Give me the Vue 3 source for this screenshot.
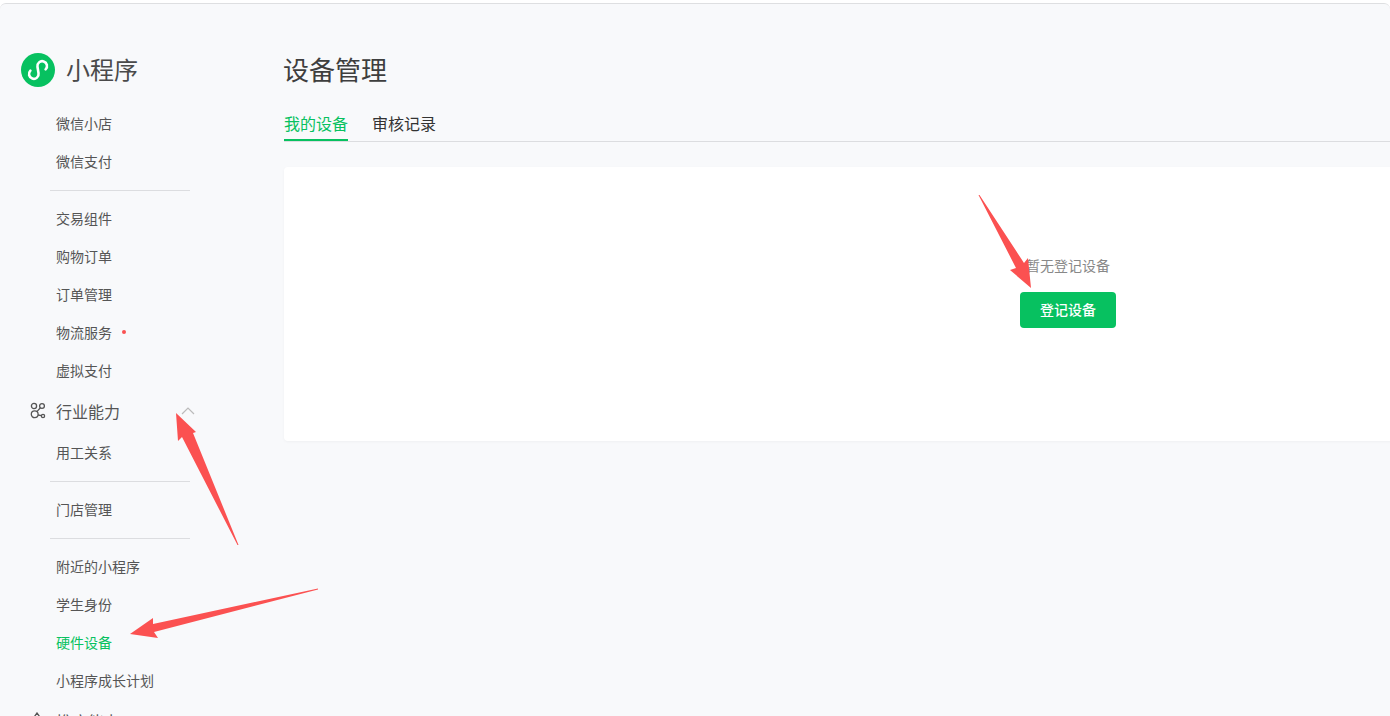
<template>
  <div class="page">
    <aside class="sidebar">
      <div class="brand">
        <svg class="logo" width="34" height="34" viewBox="0 0 34 34">
          <circle cx="17" cy="17" r="17" fill="#07c160" />
          <path d="M9.400 17.600A4.800 4.800 0 1 0 17.530 20.200L16.470 13.800A4.800 4.800 0 1 1 24.600 16.400" fill="none" stroke="#fff" stroke-width="2.600" stroke-linecap="round" />
        </svg>
        <span class="brand-name">小程序</span>
      </div>
      <template v-for="(item, i) in menu" :key="i">
        <div v-if="item.divider" class="divider"></div>
        <div v-else-if="item.group" class="group">
          <svg v-if="item.open" class="group-icon" width="18" height="18" viewBox="0 0 18 18" fill="none" stroke="#555" stroke-width="1.300">
            <circle cx="4" cy="4" r="2.600" />
            <circle cx="12" cy="4" r="2.400" />
            <circle cx="4.700" cy="12.300" r="3.400" />
            <circle cx="13" cy="14" r="1.600" />
            <path d="M10.400 5.800l-3.500 3.800M8 13l3.500.6" />
          </svg>
          <svg v-else class="group-icon" width="18" height="18" viewBox="0 0 18 18" fill="none" stroke="#555" stroke-width="1.300">
            <path d="M2 8l5-7 5 7" />
          </svg>
          <span>{{ item.label }}</span>
          <svg v-if="item.open" class="chevron" width="14" height="8" viewBox="0 0 14 8" fill="none" stroke="#bbb" stroke-width="1.200">
            <path d="M1 7l6-6 6 6" />
          </svg>
        </div>
        <div v-else class="item" :class="{ active: item.active }">
          {{ item.label }}<i v-if="item.dot" class="dot"></i>
        </div>
      </template>
    </aside>

    <main class="main">
      <h1 class="title">设备管理</h1>
      <div class="tabs">
        <div class="tab active">我的设备</div>
        <div class="tab">审核记录</div>
      </div>
      <section class="card">
        <p class="empty">暂无登记设备</p>
        <button class="btn">登记设备</button>
      </section>
    </main>

    <!-- 红色标注箭头 -->
    <svg class="marks" width="1390" height="716" viewBox="0 0 1390 716">
      <polygon v-for="(p, i) in arrows" :key="i" :points="p" fill="#fb5151" />
    </svg>
  </div>
</template>

<script setup>
const menu = [
  { label: '微信小店' },
  { label: '微信支付' },
  { divider: true },
  { label: '交易组件' },
  { label: '购物订单' },
  { label: '订单管理' },
  { label: '物流服务', dot: true },
  { label: '虚拟支付' },
  { label: '行业能力', group: true, open: true },
  { label: '用工关系' },
  { divider: true },
  { label: '门店管理' },
  { divider: true },
  { label: '附近的小程序' },
  { label: '学生身份' },
  { label: '硬件设备', active: true },
  { label: '小程序成长计划' },
  { label: '推广能力', group: true }
]

const arrows = [
  '238.500,545 237.500,545 182,437 178,441 176,413 196,432 193,433',
  '318,589.500 318,588.500 153,624 153,618 130,634 158,638 154,632',
  '979.500,195 978.500,195 1016,268 1010,270 1031,288 1028,258 1024,263'
]
</script>

<style scoped>
.page {
  position: relative;
  display: flex;
  width: 1390px;
  height: 713px;
  margin-top: 3px;
  overflow: hidden;
  background: #f8f9fb;
  border-top: 1px solid #dedfe1;
  border-radius: 6px 6px 0 0;
  box-sizing: border-box;
  font-family: "Noto Sans CJK SC", "Liberation Sans", sans-serif;
  color: #555;
}

.sidebar {
  flex: 0 0 284px;
  padding-top: 49px;
  box-sizing: border-box;
}

.brand {
  display: flex;
  align-items: center;
  gap: 11px;
  height: 34px;
  margin: 0 0 17px 21px;
}

.brand-name {
  position: relative;
  top: -2px;
  font-size: 24px;
  color: #4a4a4a;
}

.item {
  display: flex;
  align-items: center;
  height: 38px;
  padding-left: 56px;
  font-size: 14px;
  color: #555;
}

.item.active {
  color: #07c160;
}

.dot {
  width: 4px;
  height: 4px;
  margin-left: 10px;
  border-radius: 50%;
  background: #fa5151;
}

.divider {
  width: 140px;
  height: 1px;
  margin: 10px 0 8px 50px;
  background: #dcdde0;
}

.group {
  position: relative;
  display: flex;
  align-items: center;
  height: 44px;
  padding-left: 56px;
  font-size: 16px;
}

.group-icon {
  position: absolute;
  left: 30px;
  top: 13px;
}

.chevron {
  position: absolute;
  left: 181px;
  top: 18px;
}

.main {
  flex: 0 0 1568px;
  padding-top: 43px;
}

.title {
  margin: 0 0 0 -1px;
  font-size: 26px;
  font-weight: 400;
  line-height: 44px;
  color: #3e3e3e;
}

.tabs {
  display: flex;
  gap: 24px;
  height: 37px;
  margin-top: 13px;
  border-bottom: 1px solid #dcdde0;
}

.tab {
  height: 37px;
  line-height: 38px;
  font-size: 16px;
  color: #333;
  box-sizing: border-box;
}

.tab.active {
  color: #07c160;
  border-bottom: 2px solid #07c160;
}

.card {
  display: flex;
  flex-direction: column;
  align-items: center;
  height: 274px;
  margin-top: 25px;
  padding-top: 87px;
  box-sizing: border-box;
  background: #fff;
  border-radius: 4px 0 0 4px;
  box-shadow: 0 1px 3px rgba(0, 0, 0, 0.04);
}

.empty {
  margin: 0 0 16px;
  font-size: 14px;
  line-height: 22px;
  color: #888;
}

.btn {
  width: 96px;
  height: 36px;
  padding: 0 0 2px;
  border: 0;
  border-radius: 4px;
  background: #07c160;
  color: #fff;
  font-family: inherit;
  font-size: 14px;
  font-weight: 500;
}

.marks {
  position: absolute;
  left: 0;
  top: -4px;
  pointer-events: none;
}
</style>

<style>
body {
  background: #fff;
}
</style>
